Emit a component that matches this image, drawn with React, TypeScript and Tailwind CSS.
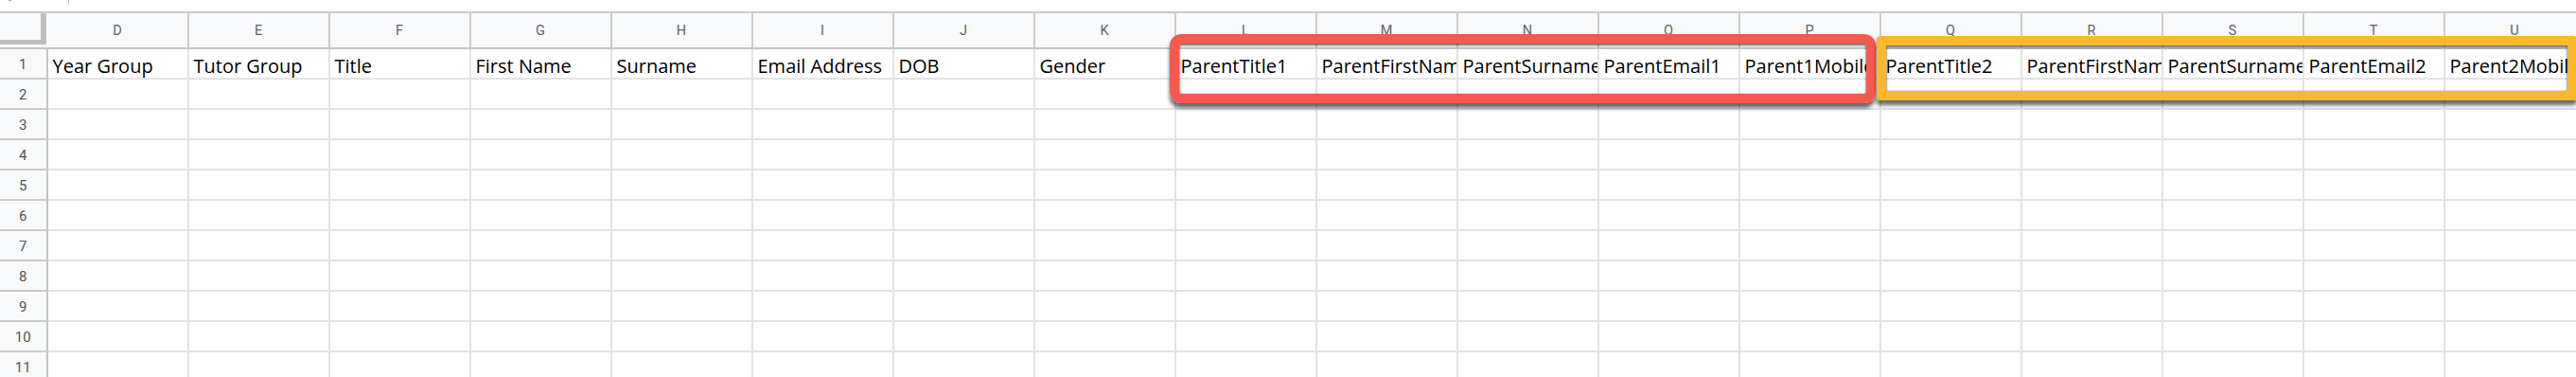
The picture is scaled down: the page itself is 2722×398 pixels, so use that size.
import React from "react";

const cols = ["D","E","F","G","H","I","J","K","L","M","N","O","P","Q","R","S","T","U"];
const headers = [
  "Year Group","Tutor Group","Title","First Name","Surname","Email Address","DOB","Gender",
  "ParentTitle1","ParentFirstName1","ParentSurname1","ParentEmail1","Parent1Mobile",
  "ParentTitle2","ParentFirstName2","ParentSurname2","ParentEmail2","Parent2Mobile",
];
const rows = [1,2,3,4,5,6,7,8,9,10,11];

export default function App() {
  return (
    <div className="relative w-[2722px] h-[398px] overflow-hidden bg-white">
      {/* top strip */}
      <div className="flex h-[12px] overflow-hidden">
        <div className="w-[72px] shrink-0 overflow-hidden">
          <div className="ml-[7px] -mt-[12px] text-[15px] leading-[17px] text-[#9aa0a6] font-['Roboto',sans-serif]">9</div>
        </div>
        <div className="w-[1px] h-[5px] bg-[#c8c8c8]" />
      </div>

      {/* column header */}
      <div className="flex h-[39.5px] border-t-2 border-b-2 border-t-[#cbcbcb] border-b-[#c4c4c4] bg-[#f8f9fa]">
        <div className="flex w-[50.5px] shrink-0">
          <div className="w-[49px] h-[33px] border-r-[6px] border-b-[5px] border-[#bfbfbf] bg-[#f8f9fa]" />
          <div className="w-[1.5px] bg-white" />
        </div>
        {cols.map((c) => (
          <div
            key={c}
            className="w-[149px] shrink-0 border-r-2 border-r-[#cccccc] text-center pt-[3px] text-[14.5px] leading-[32px] text-[#606368] font-['Roboto',sans-serif]"
          >
            {c}
          </div>
        ))}
      </div>

      {/* rows */}
      {rows.map((r) => (
        <div key={r} className="flex h-[32.1px]">
          <div className="w-[50.5px] shrink-0 bg-[#f8f9fa] border-r-2 border-r-[#c4c4c4] border-b-2 border-b-[#cacaca] text-center pt-[2px] text-[15px] leading-[28px] text-[#555555] font-['Roboto',sans-serif]">
            {r}
          </div>
          {cols.map((c, i) => (
            <div
              key={c}
              className="w-[149px] shrink-0 border-r-2 border-b-2 border-[#e2e2e2] overflow-hidden whitespace-nowrap pl-[5px] pt-[5px] text-[20px] leading-[26px] text-black font-['Open_Sans',sans-serif]"
            >
              {r === 1 ? headers[i] : ""}
            </div>
          ))}
        </div>
      ))}

      {/* annotation boxes */}
      <div className="absolute left-[1236px] top-[36px] w-[746px] h-[73px] rounded-[12px] border-[10px] border-[#f65a4f] shadow-[0_5px_4px_rgba(0,0,0,0.6),inset_0_2px_3px_rgba(0,0,0,0.55),inset_0_0_2px_rgba(0,0,0,0.4)]" />
      <div className="absolute left-[1983px] top-[37.5px] w-[740px] h-[68px] rounded-[4px] border-[10px] border-[#fcb82b] shadow-[0_5px_4px_rgba(0,0,0,0.6),inset_0_2px_3px_rgba(0,0,0,0.55),inset_0_0_2px_rgba(0,0,0,0.4)]" />
    </div>
  );
}
